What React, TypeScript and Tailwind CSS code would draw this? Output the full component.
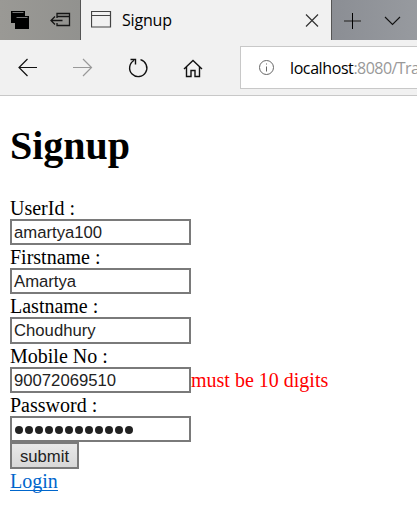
import React from 'react';

type Field = { label: string; value: string; size: string; error?: string; secret?: boolean };

const fields: Field[] = [
  { label: 'UserId :', value: 'amartya100', size: 'h-[26px]' },
  { label: 'Firstname :', value: 'Amartya', size: 'h-[26px]' },
  { label: 'Lastname :', value: 'Choudhury', size: 'h-[27px]' },
  { label: 'Mobile No :', value: '90072069510', size: 'h-[26px]', error: 'must be 10 digits' },
  { label: 'Password :', value: '', size: 'h-[26px]', secret: true },
];

function TabBar() {
  return (
    <header className="flex h-10">
      <div className="w-[81px] shrink-0 border-r border-[#555] bg-linear-to-r from-[#9a9995] to-[#92928f]">
        <svg width="80" height="40" viewBox="0 0 80 40" fill="none">
          <path d="M11 11h14v5H15v7h-4z" fill="#000" />
          <path d="M12.5 12.5h11" stroke="#777" />
          <path d="M15 16h14v13H15z" fill="#000" />
          <path d="M16.5 17.5h11" stroke="#777" />
          <path d="M57 18v-4.500h12.500v12H57v-2.500M57 16.500h12M62.500 20.500h-11.500M55 16.500l-4 4 4 4" stroke="#151515" strokeWidth="1.3" />
        </svg>
      </div>
      <div className="flex w-[250px] shrink-0 items-center bg-[#f1f1f1] pr-[12px] pl-[10px]">
        <svg width="21" height="40" viewBox="0 0 21 40" fill="none" stroke="#444">
          <path d="M.5 11.500h19v15.500H.5zM.5 15.500h19" strokeWidth="1.2" />
        </svg>
        <span className="ml-[10px] grow font-['Open_Sans','Noto_Sans',sans-serif] text-[16px] leading-10 tracking-[-0.2px] text-black">Signup</span>
        <svg width="14" height="40" viewBox="0 0 14 40" fill="none" stroke="#333" strokeWidth="1.2">
          <path d="M1 14.500l12 12M13 14.500l-12 12" />
        </svg>
      </div>
      <div className="grow border-l border-[#555] bg-linear-to-r from-[#8b8e94] to-[#979a9f]">
        <svg width="85" height="40" viewBox="0 0 85 40" fill="none">
          <path d="M12 21h17" stroke="#444" strokeWidth="1.5" />
          <path d="M20.500 13v16" stroke="#000" />
          <path d="M53 17l7.500 7.500 7.500-7.500" stroke="#111" strokeWidth="1.1" />
        </svg>
      </div>
    </header>
  );
}

function Toolbar() {
  return (
    <nav className="flex h-14 overflow-hidden border-b border-[#c8c8c8] bg-[#f1f1f1]">
      <svg className="shrink-0" width="240" height="55" viewBox="0 40 240 55" fill="none" stroke="#111" strokeWidth="1.2">
        <path d="M37 67.500H19M27.500 59l-8.500 8.500 8.500 8.500" />
        <path d="M73 67.500h18.500M83 59l8.500 8.500-8.500 8.500" stroke="#999" />
        <path d="M140.500 59.700a8.600 8.600 0 1 1-6.500.8M130.500 59.500h5v5" strokeWidth="1.4" />
        <path d="M184 69l9-8.500 9 8.500M186.500 67v9.500h4.500v-6h4v6h4.500V67" strokeWidth="1.4" />
      </svg>
      <div className="mt-[6px] flex h-[43px] grow items-center border border-r-0 border-[#c8c8c8] bg-white pl-[18px] whitespace-nowrap">
        <svg className="shrink-0" width="16" height="16" viewBox="0 0 16 16" fill="none" stroke="#666">
          <circle cx="7.500" cy="7.500" r="7" />
          <path d="M7.500 6.500v5M7.500 3.500v1" />
        </svg>
        <span className="ml-[15px] pt-[2px] font-['Open_Sans','Noto_Sans',sans-serif] text-[16px] tracking-[-0.4px] text-[#999]">
          <span className="text-black">localhost</span><span className="tracking-[-0.55px]">:8080/Tra</span>
        </span>
      </div>
    </nav>
  );
}

export default function App() {
  return (
    <div className="h-[524px] w-[417px] overflow-hidden bg-white font-['Liberation_Serif',serif] text-[20px] leading-[23px] text-black">
      <TabBar />
      <Toolbar />
      <main className="px-[10px] pt-[27px]">
        <h1 className="h-[73px] text-[40px] leading-[46px] font-bold">Signup</h1>
        <form onSubmit={(event) => event.preventDefault()}>
          {fields.map((field) => (
            <div key={field.label}>
              <label className="block h-[23px] leading-[25px]">{field.label}</label>
              <div className="flex items-center">
                <div className={`flex w-[181px] shrink-0 items-center border-2 border-[#7a7a7a] pl-[2px] font-['Liberation_Sans',sans-serif] text-[16.700px] text-[#222] ${field.size}`}>
                  {field.secret ? (
                    <span className="flex gap-[2px] pt-[2px] pl-[1px]">
                      {Array.from({ length: 12 }, (_, index) => (
                        <span key={index} className="size-[8px] rounded-full bg-[#222]" />
                      ))}
                    </span>
                  ) : field.value}
                </div>
                {field.error && <span className="text-[#f00]">{field.error}</span>}
              </div>
            </div>
          ))}
          <button className="block h-[27px] w-[69px] border-2 border-[#7a7a7a] bg-linear-to-b from-[#e8e8e8] to-[#d8d8d8] pt-px font-['Liberation_Sans',sans-serif] text-[16.700px] leading-[23px] text-[#222]">submit</button>
        </form>
        <a href="#" className="block h-[22px] w-[48px] border-b border-[#0066cc] leading-[25px] text-[#0066cc]">Login</a>
      </main>
    </div>
  );
}
